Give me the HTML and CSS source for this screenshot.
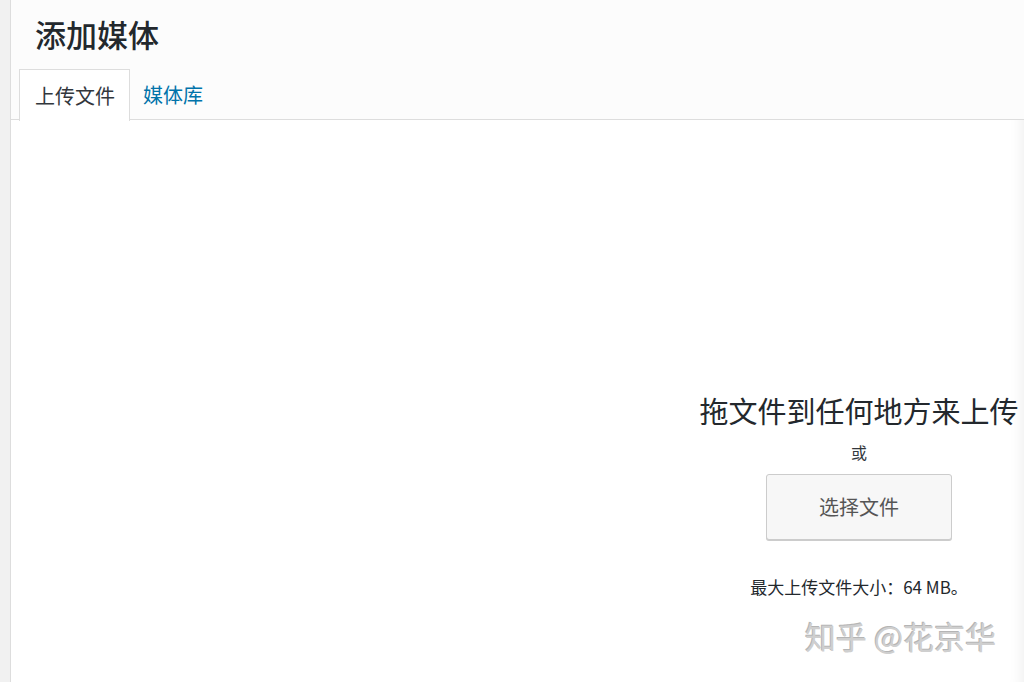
FILE: index.html
```html
<!DOCTYPE html>
<html>
<head>
<meta charset="utf-8">
<title>添加媒体</title>
<link rel="stylesheet" href="styles.css">
</head>
<body>
	<div class="frame">
		<div class="frame_head">
			<h1>添加媒体</h1>
			<ul class="tabs">
				<li class="current"><a href="javascript:;">上传文件</a></li>
				<li><a href="javascript:;">媒体库</a></li>
			</ul>
		</div>

		<div class="uploader">
			<div class="drop">
				<p class="drop_title">拖文件到任何地方来上传</p>
				<p class="drop_or">或</p>
				<a href="javascript:;" class="btn">选择文件</a>
				<p class="max_size">最大上传文件大小：64 MB。</p>
			</div>
		</div>

		<div class="mark">知乎 @花京华</div>
	</div>
</body>
</html>
```

FILE: styles.css
```css
*{margin:0; padding:0; text-decoration:none; list-style:none;}
body{background:#f1f1f1; font-family:"Noto Sans CJK SC","Liberation Sans",sans-serif; color:#23282d; overflow:hidden;}

/*面板*/
.frame{margin-left:10px; height:682px; border-left:1px solid #ddd; background:#fff; position:relative; box-shadow:inset -14px 0 14px -12px rgba(0,0,0,0.07);}
.frame_head{height:119px; background:#fcfcfc; border-bottom:1px solid #ddd; padding-left:8px;}
.frame_head h1{height:69px; line-height:68px; padding-left:16px; font-size:31px; font-weight:500; color:#23282d;}

/*选项卡*/
.tabs{display:flex; height:50px;}
.tabs li{height:50px; line-height:52px; font-size:20px;}
.tabs li a{display:block; padding:0 13px; color:#0073aa;}
.tabs li.current{height:50px; background:#fff; border:1px solid #ddd; border-bottom:none; margin-bottom:-1px; padding-bottom:1px;}
.tabs li.current a{padding:0 14px 0 15px; color:#32373c;}

/*上传区*/
.uploader{display:flex; justify-content:flex-end; padding-top:270px;}
.drop{width:330px; text-align:center;}
.drop_title{height:40px; line-height:40px; font-size:29px; color:#23282d; white-space:nowrap;}
.drop_or{height:24px; line-height:24px; margin-top:10px; font-size:16px; color:#32373c;}
.btn{display:block; width:184px; height:64px; line-height:64px; margin:10px auto 0; background:#f7f7f7; border:1px solid #ccc; border-radius:3px; box-shadow:0 1px 0 #ccc; font-size:20px; color:#555;}
.max_size{height:24px; line-height:24px; margin-top:35px; font-size:17px; color:#23282d; white-space:nowrap;}

/*水印*/
.mark{position:absolute; left:794px; top:615px; font-size:31px; line-height:42px; color:#cfcfcf; text-shadow:-1px -1px 0 #b5b5b5, 1px 1px 0 #fff; white-space:nowrap;}
```
